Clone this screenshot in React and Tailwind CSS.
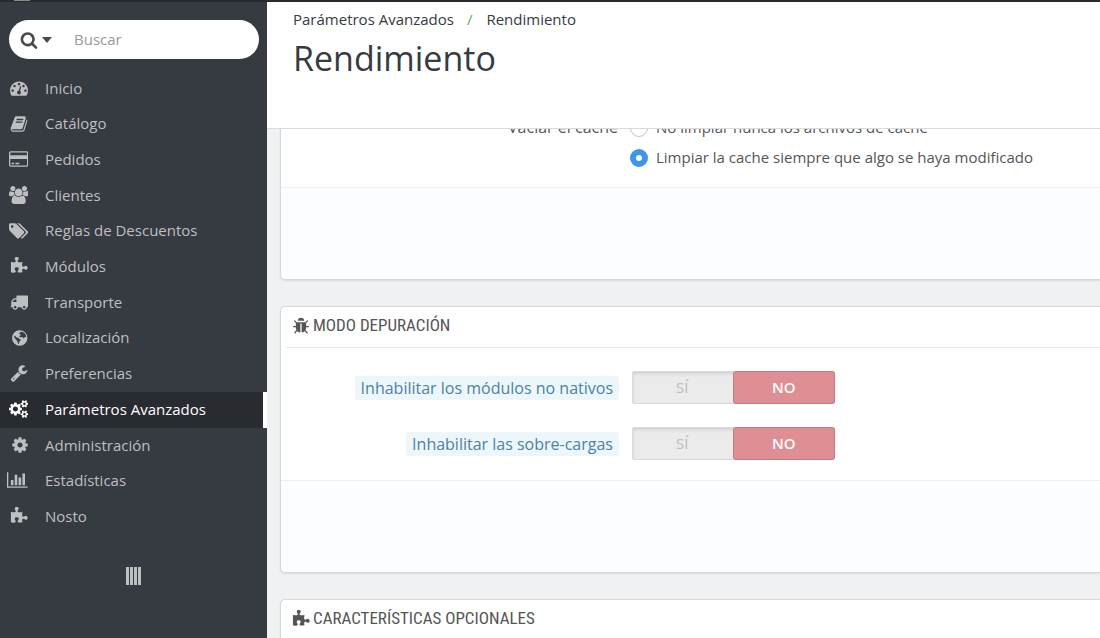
import React, { useState } from "react";

// [viewBox width, path], every glyph sits on a 1792 unit tall grid
const icons = {
  search: [
    1792,
    "M1216 832q0-185-131.5-316.5t-316.5-131.5-316.5 131.5-131.5 316.5 131.5 316.5 316.5 131.5 316.5-131.5 131.5-316.5zm512 832q0 52-38 90t-90 38q-54 0-90-38l-343-342q-179 124-399 124-143 0-273.5-55.5t-225-150-150-225-55.5-273.5 55.5-273.5 150-225 225-150 273.5-55.5 273.5 55.5 225 150 150 225 55.5 273.5q0 220-124 399l343 343q37 37 37 90z",
  ],
  dashboard: [
    1792,
    "M384 1152q0-53-37.5-90.5t-90.5-37.5-90.5 37.5-37.5 90.5 37.5 90.5 90.5 37.5 90.5-37.5 37.5-90.5zm192-448q0-53-37.5-90.5t-90.5-37.5-90.5 37.5-37.5 90.5 37.5 90.5 90.5 37.5 90.5-37.5 37.5-90.5zm428 481l101-382q6-26-7.5-48.5t-38.5-29.5-48 6.5-30 39.5l-101 382q-60 5-107 43.5t-63 98.5q-20 77 20 146t117 89 146-20 89-117q16-60-6-117t-72-91zm660-33q0-53-37.5-90.5t-90.5-37.5-90.5 37.5-37.5 90.5 37.5 90.5 90.5 37.5 90.5-37.5 37.5-90.5zm-640-640q0-53-37.5-90.5t-90.5-37.5-90.5 37.5-37.5 90.5 37.5 90.5 90.5 37.5 90.5-37.5 37.5-90.5zm448 192q0-53-37.5-90.5t-90.5-37.5-90.5 37.5-37.5 90.5 37.5 90.5 90.5 37.5 90.5-37.5 37.5-90.5zm320 448q0 261-141 483-19 29-54 29h-1402q-35 0-54-29-141-221-141-483 0-182 71-348t191-286 286-191 348-71 348 71 286 191 191 286 71 348z",
  ],
  book: [
    1792,
    "M1703 478q40 57 18 129l-275 906q-19 64-76.5 107.5t-122.5 43.5h-923q-77 0-148.5-53.5t-99.5-131.5q-24-67-2-127 0-4 3-27t4-37q1-8-3-21.5t-3-19.5q2-11 8-21t16.5-23.5 16.5-23.5q23-38 45-91.5t30-91.5q3-10 .5-30t-.5-28q3-11 17-28t17-23q21-36 42-92t25-90q1-9-2.5-32t.5-28q4-13 22-30.5t22-22.5q19-26 42.5-84.5t27.5-96.5q1-8-3-25.5t-2-26.5q2-8 9-18t18-23 17-21q8-12 16.5-30.5t15-35 16-36 19.5-32 26.5-23.5 36-11.5 47.5 5.5l-1 3q38-9 51-9h761q74 0 114 56t18 130l-274 906q-36 119-71.5 153.5t-128.5 34.5h-869q-27 0-38 15-11 16-1 43 24 70 144 70h923q29 0 56-15.5t35-41.5l300-987q7-22 5-57 38 15 59 43zm-1064 2q-4 13 2 22.5t20 9.5h608q13 0 25.5-9.5t16.5-22.5l21-64q4-13-2-22.5t-20-9.5h-608q-13 0-25.5 9.5t-16.5 22.5zm-83 256q-4 13 2 22.5t20 9.5h608q13 0 25.5-9.5t16.5-22.5l21-64q4-13-2-22.5t-20-9.5h-608q-13 0-25.5 9.5t-16.5 22.5z",
  ],
  card: [
    1920,
    "M1760 128q66 0 113 47t47 113v1216q0 66-47 113t-113 47h-1600q-66 0-113-47t-47-113v-1216q0-66 47-113t113-47h1600zm-1600 128q-13 0-22.5 9.5t-9.5 22.5v224h1664v-224q0-13-9.5-22.5t-22.5-9.5h-1600zm1600 1280q13 0 22.5-9.5t9.5-22.5v-608h-1664v608q0 13 9.5 22.5t22.5 9.5h1600zm-1504-128v-128h256v128h-256zm384 0v-128h384v128h-384z",
  ],
  users: [
    1920,
    "M593 896q-162 5-265 128h-134q-82 0-138-40.5t-56-118.5q0-353 124-353 6 0 43.5 21t97.5 42.5 119 21.5q67 0 133-23-5 37-5 66 0 159 93 293zm1071 637q0 120-73 189.5t-194 69.5h-874q-121 0-194-69.5t-73-189.5q0-53 3.5-103.5t14-109 26.5-108.5 43-97.5 62-81 85.5-53.5 111.5-20q10 0 43 21.5t73 48 107 48 135 21.5 135-21.5 107-48 73-48 43-21.5q61 0 111.5 20t85.5 53.5 62 81 43 97.5 26.5 108.5 14 109 3.5 103.5zm-1024-1277q0 106-75 181t-181 75-181-75-75-181 75-181 181-75 181 75 75 181zm704 384q0 159-112.5 271.5t-271.5 112.5-271.5-112.5-112.5-271.5 112.5-271.5 271.5-112.5 271.5 112.5 112.5 271.5zm576 225q0 78-56 118.5t-138 40.5h-134q-103-123-265-128 93-134 93-293 0-29-5-66 66 23 133 23 59 0 119-21.5t97.5-42.5 43.5-21q124 0 124 353zm-128-609q0 106-75 181t-181 75-181-75-75-181 75-181 181-75 181 75 75 181z",
  ],
  tags: [
    1920,
    "M448 448q0-53-37.5-90.5t-90.5-37.5-90.5 37.5-37.5 90.5 37.5 90.5 90.5 37.5 90.5-37.5 37.5-90.5zm1067 576q0 53-37 90l-491 492q-39 37-91 37-53 0-90-37l-715-716q-38-37-64.5-101t-26.5-117v-416q0-52 38-90t90-38h416q53 0 117 26.5t102 64.5l715 714q37 39 37 91zm384 0q0 53-37 90l-491 492q-39 37-91 37-36 0-59-14t-53-45l470-470q37-37 37-90 0-52-37-91l-715-714q-38-38-102-64.5t-117-26.5h224q53 0 117 26.5t102 64.5l715 714q37 39 37 91z",
  ],
  puzzle: [
    1792,
    "M1755 1083q0 81-44.5 135t-123.5 54q-41 0-77.5-17.5t-59-38-56.5-38-71-17.5q-110 0-110 124 0 39 16 115t15 115v5q-22 0-33 1-34 3-97.5 11.5t-115.5 13.5-98 5q-61 0-103-26.5t-42-83.5q0-37 17.5-71t38-56.5 38-59 17.5-77.5q0-79-54-123.5t-135-44.5q-84 0-143 45.5t-59 127.5q0 43 15 83t33.5 64.5 33.5 53 15 50.5q0 45-46 89-37 35-117 35-95 0-245-24-9-2-27.5-4t-27.5-4l-13-2q-1 0-3-1-2 0-2-1v-1024q2 1 17.5 3.5t34 5 21.5 3.5q150 24 245 24 80 0 117-35 46-44 46-89 0-22-15-50.5t-33.5-53-33.5-64.5-15-83q0-82 59-127.5t144-45.5q80 0 134 44.5t54 123.5q0 41-17.5 77.5t-38 59-38 56.5-17.5 71q0 57 42 83.5t103 26.5q64 0 180-15t163-17v2q-1 2-3.5 17.5t-5 34-3.5 21.5q-24 150-24 245 0 80 35 117 44 46 89 46 22 0 50.5-15t53-33.5 64.5-33.5 83-15q82 0 127.5 59t45.5 143z",
  ],
  truck: [
    1792,
    "M640 1408q0-52-38-90t-90-38-90 38-38 90 38 90 90 38 90-38 38-90zm-384-512h384v-256h-158q-13 0-22 9l-195 195q-9 9-9 22v30zm1280 512q0-52-38-90t-90-38-90 38-38 90 38 90 90 38 90-38 38-90zm256-1088v1024q0 15-4 26.5t-13.5 18.5-16.5 11.5-23.5 6-22.5 2-25.5 0-22.5-.5q0 106-75 181t-181 75-181-75-75-181h-384q0 106-75 181t-181 75-181-75-75-181h-64q-3 0-22.5.5t-25.5 0-22.5-2-23.5-6-16.5-11.5-13.5-18.5-4-26.5q0-26 19-45t45-19v-320q0-8-.5-35t0-38 2.5-34.5 6.5-37 14-30.5 22.5-30l198-198q19-19 50.5-32t58.5-13h160v-192q0-26 19-45t45-19h1024q26 0 45 19t19 45z",
  ],
  globe: [
    1600,
    "M768 128a768 768 0 1 0 0 1536a768 768 0 1 0 0-1536zM860 270l200 20 200 130 120 170 30 170-110 60-90 20-60 110-80-130-150-20-90 40-110-110 60-90 110-20-40-90-130-20 50-140zM210 640l110 50 130 160 170 30 120 110 130 50-60 150-90 90-40 210-80-20-40-190-110-150-130-150-100-180z",
  ],
  wrench: [
    1792,
    "M448 1472q0-26-19-45t-45-19-45 19-19 45 19 45 45 19 45-19 19-45zm644-420l-682 682q-37 37-90 37-52 0-91-37l-106-108q-38-36-38-90 0-53 38-91l681-681q39 98 114.5 173.5t173.5 114.5zm634-435q0 39-23 106-47 134-164.5 217.5t-258.5 83.5q-185 0-316.5-131.5t-131.5-316.5 131.5-316.5 316.5-131.5q58 0 121.5 16.5t107.5 46.5q16 11 16 28t-16 28l-293 169v224l193 107q5-3 79-48.5t135.5-81 70.5-35.5q15 0 23.5 10t8.5 25z",
  ],
  cogs: [
    1920,
    "M896 896q0-106-75-181t-181-75-181 75-75 181 75 181 181 75 181-75 75-181zm768 512q0-52-38-90t-90-38-90 38-38 90q0 53 37.5 90.5t90.5 37.5 90.5-37.5 37.5-90.5zm0-1024q0-52-38-90t-90-38-90 38-38 90q0 53 37.5 90.5t90.5 37.5 90.5-37.5 37.5-90.5zm-384 421v185q0 10-7 19.5t-16 10.5l-155 24q-11 35-32 76 34 48 90 115 7 11 7 20 0 12-7 19-23 30-82.5 89.5t-78.5 59.5q-11 0-21-7l-115-90q-37 19-77 31-11 108-23 155-7 24-30 24h-186q-11 0-20-7.5t-10-17.5l-23-153q-34-10-75-31l-118 89q-7 7-20 7-11 0-21-8-144-133-144-160 0-9 7-19 10-14 41-53t47-61q-23-44-35-82l-152-24q-10-1-17-9.5t-7-19.5v-185q0-10 7-19.5t16-10.5l155-24q11-35 32-76-34-48-90-115-7-11-7-20 0-12 7-20 22-30 82-89t79-59q11 0 21 7l115 90q34-18 77-32 11-108 23-154 7-24 30-24h186q11 0 20 7.5t10 17.5l23 153q34 10 75 31l118-89q8-7 20-7 11 0 21 8 144 133 144 160 0 8-7 19-12 16-42 54t-45 60q23 48 34 82l152 23q10 2 17 10.5t7 19.5zm640 533v140q0 16-149 31-12 27-30 52 51 113 51 138 0 4-4 7-122 71-124 71-8 0-46-47t-52-68q-20 2-30 2t-30-2q-14 21-52 68t-46 47q-2 0-124-71-4-3-4-7 0-25 51-138-18-25-30-52-149-15-149-31v-140q0-16 149-31 13-29 30-52-51-113-51-138 0-4 4-7 4-2 35-20t59-34 30-16q8 0 46 46.5t52 67.5q20-2 30-2t30 2q51-71 92-112l6-2q4 0 124 70 4 3 4 7 0 25-51 138 17 23 30 52 149 15 149 31zm0-1024v140q0 16-149 31-12 27-30 52 51 113 51 138 0 4-4 7-122 71-124 71-8 0-46-47t-52-68q-20 2-30 2t-30-2q-14 21-52 68t-46 47q-2 0-124-71-4-3-4-7 0-25 51-138-18-25-30-52-149-15-149-31v-140q0-16 149-31 13-29 30-52-51-113-51-138 0-4 4-7 4-2 35-20t59-34 30-16q8 0 46 46.5t52 67.5q20-2 30-2t30 2q51-71 92-112l6-2q4 0 124 70 4 3 4 7 0 25-51 138 17 23 30 52 149 15 149 31z",
  ],
  cog: [
    1664,
    "M1152 896q0-106-75-181t-181-75-181 75-75 181 75 181 181 75 181-75 75-181zm512-109v222q0 12-8 23t-20 13l-185 28q-19 54-39 91 35 50 107 138 10 12 10 25t-9 23q-27 37-99 108t-94 71q-12 0-26-9l-138-108q-44 23-91 38-16 136-29 186-7 28-36 28h-222q-14 0-24.5-8.5t-11.5-21.5l-28-184q-49-16-90-37l-141 107q-10 9-25 9-14 0-25-11-126-114-165-168-7-10-7-23 0-12 8-23 15-21 51-66.5t54-70.5q-27-50-41-99l-183-27q-13-2-21-12.5t-8-23.5v-222q0-12 8-23t19-13l186-28q14-46 39-92-40-57-107-138-10-12-10-24 0-10 9-23 26-36 98.5-107.5t94.5-71.5q13 0 26 10l138 107q44-23 91-38 16-136 29-186 7-28 36-28h222q14 0 24.5 8.5t11.5 21.5l28 184q49 16 90 37l142-107q9-9 24-9 13 0 25 10 129 119 165 170 7 8 7 22 0 12-8 23-15 21-51 66.5t-54 70.5q26 50 41 98l183 28q13 2 21 12.5t8 23.5z",
  ],
  chart: [
    2048,
    "M640 896v512h-256v-512h256zm384-512v1024h-256v-1024h256zm1024 1152v128h-2048v-1536h128v1408h1920zm-640-896v768h-256v-768h256zm384-384v1152h-256v-1152h256z",
  ],
  bug: [
    1792,
    "M1696 960q0 26-19 45t-45 19h-224q0 171-67 290l208 209q19 19 19 45t-19 45q-18 19-45 19t-45-19l-198-197q-5 5-15 13t-42 28.5-65 36.5-82 29-97 13v-896h-128v896q-51 0-101.5-13.5t-87-33-66-39-43.5-32.5l-15-14-183 207q-20 21-48 21-24 0-43-16-19-18-20.5-44.5t15.5-46.5l202-227q-58-114-58-274h-224q-26 0-45-19t-19-45 19-45 45-19h224v-294l-173-173q-19-19-19-45t19-45 45-19 45 19l173 173h844l173-173q19-19 45-19t45 19 19 45-19 45l-173 173v294h224q26 0 45 19t19 45zm-480-576h-640q0-133 93.5-226.5t226.5-93.5 226.5 93.5 93.5 226.5z",
  ],
};

const Icon = ({ name, className }) => {
  const [width, path] = icons[name];
  return (
    <svg
      viewBox={`0 0 ${width} 1792`}
      className={className}
      fill="currentColor"
      fillRule={name === "globe" ? "evenodd" : "nonzero"}
      aria-hidden="true"
    >
      <path d={path} />
    </svg>
  );
};

const menu = [
  { label: "Inicio", icon: "dashboard" },
  { label: "Catálogo", icon: "book" },
  { label: "Pedidos", icon: "card" },
  { label: "Clientes", icon: "users" },
  { label: "Reglas de Descuentos", icon: "tags" },
  { label: "Módulos", icon: "puzzle" },
  { label: "Transporte", icon: "truck" },
  { label: "Localización", icon: "globe" },
  { label: "Preferencias", icon: "wrench" },
  { label: "Parámetros Avanzados", icon: "cogs", active: true },
  { label: "Administración", icon: "cog" },
  { label: "Estadísticas", icon: "chart" },
  { label: "Nosto", icon: "puzzle" },
];

const Sidebar = () => {
  return (
    <aside className="flex w-[267px] shrink-0 flex-col bg-[#363a41]">
      <form className="ml-[9px] mr-2 mt-[18px] flex h-[39px] items-center rounded-full bg-white pl-[11px]">
        <button type="button" aria-label="Tipo de búsqueda" className="flex items-center gap-1 text-[#4a4a4a]">
          <Icon name="search" className="h-[18px] w-auto" />
          <svg viewBox="0 0 10 6" className="h-[6px] w-[10px]" fill="currentColor" aria-hidden="true">
            <path d="M0 0h10L5 6z" />
          </svg>
        </button>
        <input
          type="text"
          aria-label="Buscar"
          placeholder="Buscar"
          className="ml-[22px] min-w-0 flex-1 bg-transparent text-[15px] text-[#555] outline-none placeholder:text-[#999]"
        />
      </form>

      <nav className="mt-3">
        <ul className="grid h-[464px] auto-rows-fr">
          {menu.map((item) => (
            <li key={item.label}>
              <a
                href="#"
                className={
                  item.active
                    ? "flex h-full items-center border-r-4 border-white bg-[#282b30] pb-0.5 text-[15px] text-white"
                    : "flex h-full items-center pb-0.5 text-[15px] text-[#bebfc1]"
                }
              >
                <span className="flex w-7 shrink-0 justify-end">
                  <Icon name={item.icon} className="h-[18px] w-auto" />
                </span>
                <span className="ml-[17px]">{item.label}</span>
              </a>
            </li>
          ))}
        </ul>
      </nav>

      <button type="button" aria-label="Contraer menú" className="mx-auto mt-8 flex h-[18px] gap-px">
        <span className="w-[3px] bg-[#bebfc1]" />
        <span className="w-[3px] bg-[#bebfc1]" />
        <span className="w-[3px] bg-[#bebfc1]" />
        <span className="w-[3px] bg-[#bebfc1]" />
      </button>
    </aside>
  );
};

const Panel = ({ title, icon, children }) => {
  return (
    <section className="rounded-l-[5px] border border-r-0 border-[#d3d8db] bg-white shadow-[0_1px_2px_rgba(0,0,0,0.1)]">
      {title && (
        <h2 className="ml-[5px] flex h-[41px] items-center gap-[3px] border-b border-[#e6e9eb] pb-0.5 pl-[6px] font-['Ubuntu_Condensed','Roboto_Condensed','Open_Sans_Condensed',sans-serif] text-[17px] font-normal uppercase text-[#555]">
          <Icon name={icon} className="h-[18px] w-auto" />
          {title}
        </h2>
      )}
      {children}
    </section>
  );
};

const PanelFooter = () => <div className="h-[92px] rounded-bl-[5px] border-t border-[#eceef0] bg-[#fcfdfe]" />;

const Switch = ({ label, name }) => {
  const [enabled, setEnabled] = useState(false);

  const on = "relative flex flex-1 items-center justify-center rounded-[3px] border border-[#c9777c] bg-[#df8f94] font-semibold text-white";
  const off = "relative flex flex-1 items-center justify-center text-[#bbb]";

  return (
    <div role="radiogroup" aria-labelledby={name} className="flex items-center">
      <div className="flex w-[338px] shrink-0 justify-end">
        <span id={name} className="rounded-[3px] bg-[#edf6fb] px-[6px] text-base text-[#4b83a0]">
          {label}
        </span>
      </div>
      <div className="ml-[13px] flex h-[33px] w-[203px] rounded-[3px] bg-[#ebebeb] text-[15px] shadow-[inset_0_0_0_1px_#dadada,inset_0_2px_4px_rgba(0,0,0,0.15)]">
        <label className={enabled ? on : off}>
          <input type="radio" name={name} className="sr-only" checked={enabled} onChange={() => setEnabled(true)} />
          SÍ
        </label>
        <label className={enabled ? off : on}>
          <input type="radio" name={name} className="sr-only" checked={!enabled} onChange={() => setEnabled(false)} />
          NO
        </label>
      </div>
    </div>
  );
};

const cacheOptions = [
  { value: "never", label: "No limpiar nunca los archivos de cache" },
  { value: "always", label: "Limpiar la cache siempre que algo se haya modificado" },
];

const CacheOptions = () => {
  const [clear, setClear] = useState("always");

  return (
    <div role="radiogroup" aria-labelledby="cache" className="flex h-[69px] items-end pb-[17px] text-[#555]">
      <span id="cache" className="w-[337px] shrink-0 pb-[31px] text-right text-base">
        Vaciar el cache
      </span>
      <div className="ml-3 flex flex-col gap-[6px]">
        {cacheOptions.map((option) => (
          <label key={option.value} className="flex h-6 items-center gap-2 text-[15px]">
            <input
              type="radio"
              name="cache"
              className="size-[18px] shrink-0 appearance-none rounded-full border border-[#c4c4c4] bg-white checked:border-[6px] checked:border-[#3d94ee]"
              checked={clear === option.value}
              onChange={() => setClear(option.value)}
            />
            <span className="pb-0.5">{option.label}</span>
          </label>
        ))}
      </div>
    </div>
  );
};

const App = () => {
  return (
    <div className="flex h-screen flex-col overflow-hidden bg-[#eff1f2] font-['Open_Sans',sans-serif]">
      <div className="h-[2px] shrink-0 bg-[#282b30] pl-[14px]">
        <div className="h-px w-4 bg-[#8c8a80]" />
      </div>
      <div className="flex min-h-0 flex-1">
        <Sidebar />
        <main className="flex min-w-0 flex-1 flex-col">
          <header className="z-10 h-[127px] shrink-0 border-b border-[#d8dbde] bg-white pl-[26px] pt-[5px]">
            <nav aria-label="Ruta" className="flex text-[15px] leading-6 text-[#363a41]">
              <a href="#">Parámetros Avanzados</a>
              <span className="ml-[13px] mr-[14px] text-[#6aa84f]">/</span>
              <a href="#">Rendimiento</a>
            </nav>
            <h1 className="text-[34px] leading-[54px] text-[#363a41]">Rendimiento</h1>
          </header>

          <div className="flex min-h-0 flex-1 flex-col overflow-hidden pl-[13px]">
            <div className="-mt-3 flex flex-col gap-[26px]">
              <Panel>
                <CacheOptions />
                <PanelFooter />
              </Panel>

              <Panel title="Modo depuración" icon="bug">
                <div className="flex flex-col gap-[23px] pb-5 pt-[23px]">
                  <Switch label="Inhabilitar los módulos no nativos" name="modules" />
                  <Switch label="Inhabilitar las sobre-cargas" name="overrides" />
                </div>
                <PanelFooter />
              </Panel>

              <Panel title="Características opcionales" icon="puzzle">
                <div className="h-24" />
              </Panel>
            </div>
          </div>
        </main>
      </div>
    </div>
  );
};

export default App;
